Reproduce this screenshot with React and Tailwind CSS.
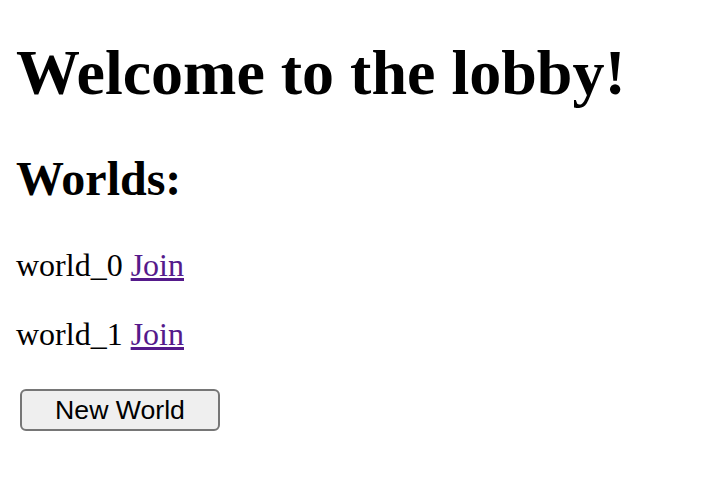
import React from 'react';

const worlds = ['world_0', 'world_1'];

export default function App() {
  return (
    <div className="min-h-screen bg-white px-[16px] pt-[36px] text-black font-['Liberation_Serif','Times_New_Roman',serif]">
      <h1 className="mb-[41px] text-[64px] font-bold leading-[normal]">Welcome to the lobby!</h1>

      <h2 className="mb-[41px] text-[48px] font-bold leading-[normal]">Worlds:</h2>

      {worlds.map((name) => (
        <p key={name} className="my-[32px] text-[32px] leading-[normal]">
          {name}{' '}
          <a href="#" className="text-[#551a8b] underline">Join</a>
        </p>
      ))}

      {/* new world button */}
      <button className="ml-[4px] mt-[4px] h-[42px] w-[200px] rounded-[6px] border-2 border-[#767676] bg-[#efefef] text-[26.67px] leading-none text-black font-['Liberation_Sans',Arial,sans-serif]">
        New World
      </button>
    </div>
  );
}
